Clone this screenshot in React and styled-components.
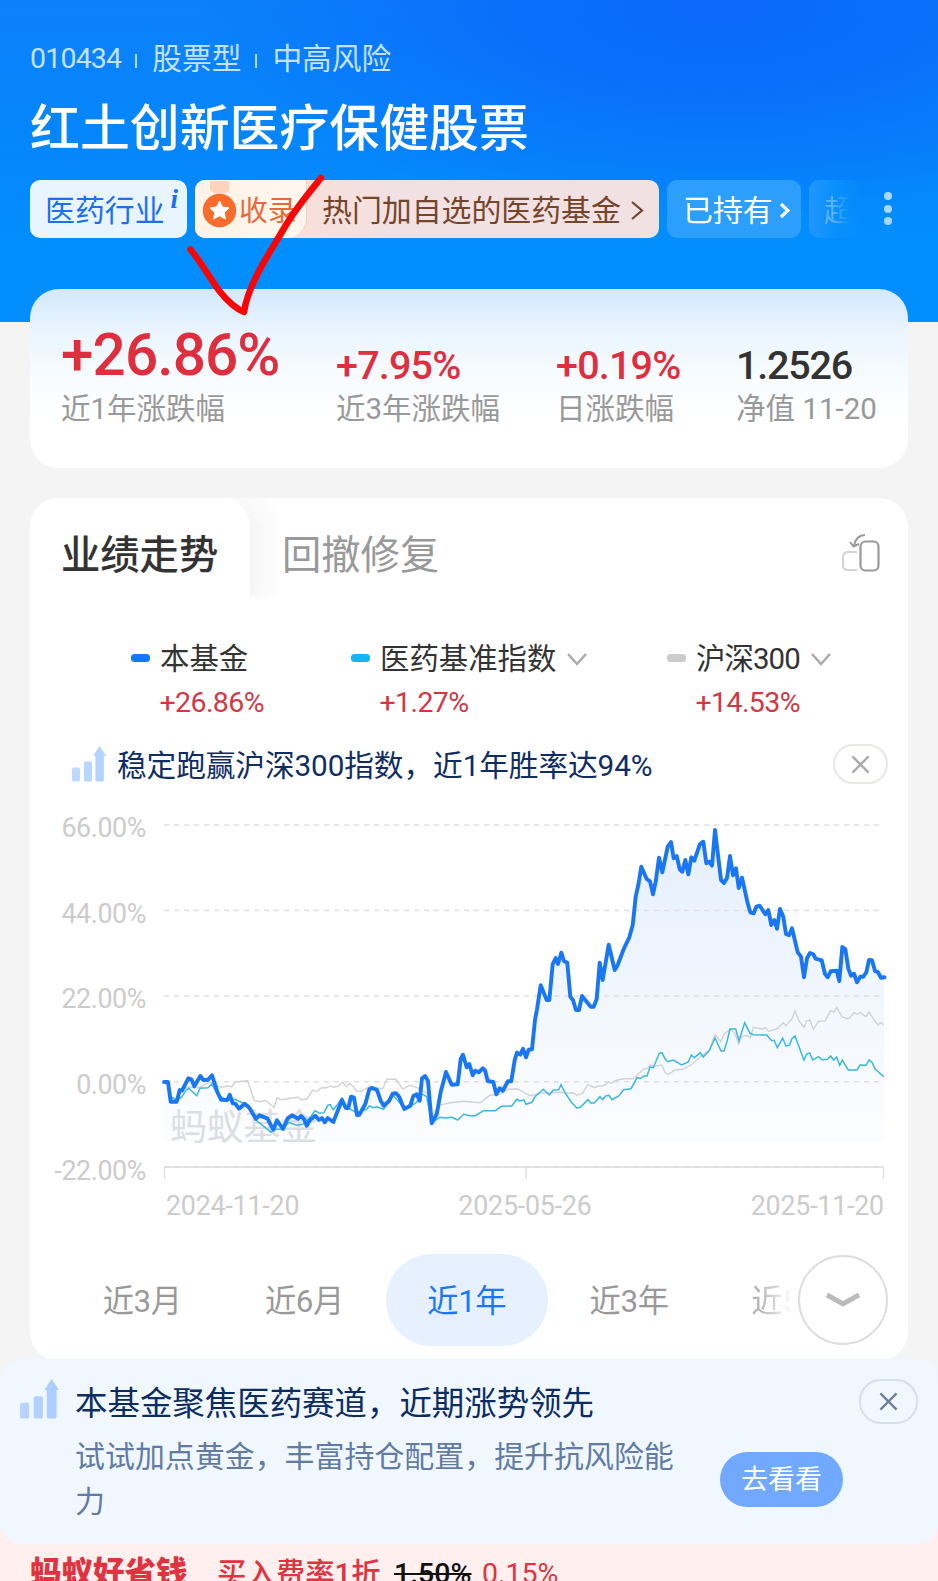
import React from "react";
import styled, { createGlobalStyle, css } from "styled-components";

const GlobalStyle = createGlobalStyle`
  * { box-sizing: border-box; }
  body {
    margin: 0;
    background: #f4f4f4;
    font-family: Roboto, "Noto Sans CJK SC", sans-serif;
    -webkit-font-smoothing: antialiased;
  }
`;

const Page = styled.main`
  position: relative;
  width: 938px;
  height: 1581px;
  overflow: hidden;
  display: flex;
  flex-direction: column;
  background: #f4f4f4;
`;

const Header = styled.header`
  height: 322px;
  flex: none;
  padding: 38px 30px 0;
  color: #fff;
  background:
    radial-gradient(ellipse 520px 210px at 720px 10px, #0a68fa 0%, rgba(10, 104, 250, 0.75) 35%, rgba(10, 104, 250, 0) 100%),
    linear-gradient(180deg, #0b80fa 0%, #0587fb 50%, #038efd 75%);
`;

const Meta = styled.div`
  display: flex;
  align-items: center;
  height: 42px;
  font-size: 29.7px;
  line-height: 42px;
  color: #c4e1ff;
`;

const FundCode = styled.span`
  font-size: 28.5px;
  letter-spacing: -0.8px;
`;

const Separator = styled.i`
  width: 2px;
  height: 14px;
  margin: 4px 15px 0 14px;
  background: #b5daff;
`;

const FundName = styled.h1`
  margin: 14px 0 0;
  height: 70px;
  font-size: 49.9px;
  line-height: 71px;
  font-weight: 500;
`;

const TagRow = styled.div`
  display: flex;
  gap: 8px;
  height: 58px;
  margin-top: 16px;
  margin-right: -31px;
`;

const tagTones = {
  light: css`background: #e9f5fe; color: #1b6ff0;`,
  pink: css`background: linear-gradient(90deg, #f8dfda 110px, #f2e1e2 200px); color: #75452a;`,
  clear: css`background: #2c9efc; color: #fff;`,
  faded: css`
    background: linear-gradient(90deg, #2196fc 0%, #0890fd 50%, rgba(3, 142, 253, 0) 100%);
    color: #58b2fd;
  `,
};

const Tag = styled.div`
  position: relative;
  display: flex;
  align-items: center;
  flex: none;
  width: ${(p) => p.$width}px;
  height: 58px;
  padding-left: ${(p) => p.$inset}px;
  border-radius: 10px;
  overflow: hidden;
  font-size: 29.9px;
  line-height: 58px;
  white-space: nowrap;
  ${(p) => tagTones[p.$tone]}
`;

const TagText = styled.span`
  padding-top: 3px;
`;

const InfoMark = styled.sup`
  position: absolute;
  right: 9px;
  top: 3px;
  font: italic 700 27px/32px "Liberation Serif", serif;
`;

const Award = styled.span`
  display: flex;
  align-items: center;
  width: 112px;
  height: 58px;
  padding-left: 7px;
  gap: 2px;
  margin-right: 15px;
  border-radius: 0 0 20px 0;
  border-right: 1px solid #f6cdbf;
  background: linear-gradient(90deg, #fff3e6, #fff7ee);
  color: #e9683c;
  font-size: 28.8px;
`;

const FadingText = styled(TagText)`
  -webkit-mask-image: linear-gradient(90deg, #000 30%, transparent 85%);
`;

const MoreDots = styled.div`
  display: flex;
  flex-direction: column;
  align-items: center;
  gap: 4.5px;
  width: 9px;
  padding-top: 12px;
  margin-left: ${(p) => p.$gap}px;
  i { width: 8px; height: 8px; border-radius: 50%; background: #a9d7ff; }
`;

const StatCard = styled.section`
  display: flex;
  flex: none;
  height: 179px;
  margin: -33px 30px 0 30px;
  padding-left: 31px;
  border-radius: 29px;
  background: linear-gradient(180deg, #d1e8fe 0%, #eaf5fe 24%, #f8fcff 50%, #fff 75%);
`;

const Stat = styled.div`
  width: ${(p) => p.$width}px;
  flex: none;
  white-space: nowrap;
`;

const StatValue = styled.div`
  display: flex;
  align-items: flex-end;
  height: 100px;
  padding-bottom: ${(p) => (p.$large ? 4 : 2)}px;
  font-size: ${(p) => (p.$large ? 58.5 : 39.5)}px;
  line-height: ${(p) => (p.$large ? 60 : 42)}px;
  letter-spacing: ${(p) => p.$tracking}px;
  font-weight: 500;
  color: ${(p) => (p.$dark ? "#333" : "#df2e3d")};
`;

const StatLabel = styled.div`
  height: 40px;
  font-size: 29.5px;
  line-height: 40px;
  color: #999;
`;

const Panel = styled.section`
  display: flex;
  flex-direction: column;
  flex: none;
  height: 863px;
  margin: 30px 30px 0 30px;
  border-radius: 29px;
  background: #fff;
`;

const Tabs = styled.div`
  display: flex;
  height: 112px;
  flex: none;
`;

const ActiveTab = styled.div`
  position: relative;
  z-index: 1;
  width: 220px;
  height: 104px;
  padding-left: 31px;
  border-radius: 29px 29px 0 0;
  background: #fff;
  font-size: 39.3px;
  line-height: 117px;
  font-weight: 500;
  color: #333;
`;

const TabShade = styled.div`
  width: 52px;
  height: 104px;
  margin-left: -20px;
  border-radius: 0 0 16px 0;
  background: linear-gradient(90deg, #f5f5f5 38%, #fff);
  -webkit-mask-image: linear-gradient(180deg, rgba(0, 0, 0, 0.5), #000 30%, #000 88%, transparent);
`;

const Tab = styled.div`
  flex: 1;
  font-size: 39.3px;
  line-height: 117px;
  color: #999;
`;

const RotateIcon = styled.svg`
  width: 40px;
  height: 44px;
  margin: 35px 28px 0 0;
`;

const Legend = styled.div`
  display: flex;
  height: 98px;
  margin-top: 28px;
  padding-left: 101px;
  flex: none;
`;

const LegendItem = styled.div`
  width: ${(p) => p.$width}px;
  flex: none;
`;

const LegendName = styled.div`
  display: flex;
  align-items: center;
  height: 42px;
  font-size: 29.4px;
  line-height: 42px;
  letter-spacing: ${(p) => p.$tracking || 0}px;
  color: #333;
  white-space: nowrap;
  &::before {
    content: "";
    width: 19px;
    height: 8px;
    margin-right: 10px;
    margin-top: -3px;
    border-radius: 3.5px;
    background: ${(p) => p.$color};
  }
`;

const LegendValue = styled.div`
  height: 44px;
  padding-left: 28.5px;
  font-size: 28.5px;
  line-height: 45px;
  letter-spacing: -0.6px;
  color: #d43643;
`;

const Hint = styled.div`
  display: flex;
  align-items: center;
  height: 40px;
  flex: none;
  margin-top: 8px;
  padding: 0 20px 0 42px;
  color: #0f2d62;
  font-size: 29.7px;
  line-height: 40px;
`;

const HintText = styled.span`
  flex: 1;
  margin-left: 11px;
  padding-top: 4px;
  letter-spacing: -0.1px;
  white-space: nowrap;
`;

const CloseButton = styled.button`
  display: flex;
  align-items: center;
  justify-content: center;
  width: ${(p) => p.$width}px;
  height: ${(p) => p.$height}px;
  padding: 0;
  border: 2px solid ${(p) => p.$line};
  border-radius: 22px;
  background: transparent;
  color: ${(p) => p.$ink};
`;

const Chart = styled.div`
  display: flex;
  flex: none;
  height: 412px;
  margin-top: 16px;
`;

const YAxis = styled.div`
  width: 116px;
  padding-top: 10px;
  flex: none;
  text-align: right;
  font-size: 26.8px;
  letter-spacing: -0.4px;
  color: #ccc;
  div { height: 85.7px; line-height: 37px; }
`;

const PlotColumn = styled.div`
  width: 740px;
  margin-left: -6px;
`;

const Plot = styled.svg`
  display: block;
  width: 760px;
  height: 384px;
`;

const XAxis = styled.div`
  display: flex;
  justify-content: space-between;
  width: 718px;
  height: 40px;
  margin: 6px 0 0 26px;
  font-size: 26.8px;
  line-height: 32px;
  letter-spacing: -0.2px;
  color: #ccc;
`;

const Watermark = styled.text`
  font-size: 36.8px;
  fill: #dcdee2;
`;

const Ranges = styled.div`
  display: flex;
  align-items: center;
  flex: none;
  height: 92px;
  margin-top: 42px;
  padding-left: 31px;
`;

const Range = styled.div`
  width: 162.3px;
  height: 92px;
  flex: none;
  border-radius: 46px;
  text-align: center;
  font-size: 31.3px;
  line-height: 96px;
  letter-spacing: -0.4px;
  color: ${(p) => (p.$active ? "#1b77f5" : "#999")};
  background: ${(p) => (p.$active ? "#e6f0ff" : "transparent")};
`;

const FadedRange = styled.div`
  width: 42px;
  height: 92px;
  margin-left: 41px;
  white-space: nowrap;
  font-size: 31.3px;
  line-height: 96px;
  color: #b5b5b5;
  -webkit-mask-image: linear-gradient(90deg, #000 20%, transparent);
`;

const ExpandButton = styled.button`
  position: relative;
  display: flex;
  align-items: center;
  justify-content: center;
  width: 90px;
  height: 90px;
  margin-left: 5px;
  padding: 0;
  flex: none;
  border: 2px solid #dedede;
  border-radius: 50%;
  background: #fff;
`;

const Notice = styled.aside`
  position: absolute;
  z-index: 1;
  left: 0;
  top: 1359px;
  display: flex;
  width: 938px;
  height: 185px;
  padding: 20px 20px 0;
  border-radius: 22px;
  background: #f0f7ff;
`;

const NoticeBody = styled.div`
  width: 620px;
  margin-left: 16px;
  h2 {
    margin: 3px 0 0;
    font-size: 32.45px;
    line-height: 44px;
    font-weight: 400;
    color: #0d2c60;
  }
  p {
    margin: 8px 0 0;
    width: 606px;
    font-size: 29.95px;
    line-height: 45px;
    color: #627ba2;
  }
`;

const NoticeActions = styled.div`
  display: flex;
  flex-direction: column;
  align-items: flex-end;
  flex: 1;
`;

const GoButton = styled.button`
  width: 123px;
  height: 55px;
  margin: 28px 75px 0 0;
  padding: 0;
  border: 0;
  border-radius: 28px;
  background: #70a9ff;
  color: #fff;
  font-family: inherit;
  font-size: 27px;
  line-height: 57px;
`;

const Promo = styled.footer`
  position: absolute;
  left: 0;
  bottom: 0;
  display: flex;
  width: 938px;
  height: 60px;
  padding: 31px 0 0 30px;
  background: #fff0ef;
  color: #df3440;
  font-size: 29.4px;
  line-height: 44px;
  white-space: nowrap;
`;

const PromoBrand = styled.strong`
  width: 187px;
  font-size: 31.5px;
  font-weight: 900;
`;

const PromoText = styled.span`
  width: 177px;
  font-weight: 500;
`;

const OldRate = styled.s`
  width: 88px;
  color: #111;
  font-size: 28.5px;
  font-weight: 500;
`;

const NewRate = styled.span`
  font-size: 28.5px;
`;

const PenMark = styled.svg`
  position: absolute;
  z-index: 2;
  left: 180px;
  top: 170px;
  width: 150px;
  height: 150px;
`;

const BLUE =
  "24,282 28,282 30.7,301.7 36.7,301.7 39.7,290 42,290.7 48.3,278.3 51.3,279.3 54.3,286.3 60.3,276 63.3,280 68,279.7 72,275.3 77.3,291.7 81,299.7 87.3,300 89.7,294.7 92.7,303.3 95.3,303.7 99,308.7 104.7,303.7 109.3,307.7 116,319 119.3,315.3 127.3,318.3 133.3,329.7 137,320.3 143,329 147.7,318.3 152,315.3 158,318.7 161,316 164.3,319.3 166.7,325.7 170.3,319.7 175.3,315.7 179,320 182,318 184.7,322.3 187.7,318 193.3,322 202,300 205.7,308 208.3,308 211,296.7 214,297.7 217,315 219.3,314.7 225.3,304 229.3,289.3 232,288 237,290 240.7,300.7 243.7,305.7 249.3,300.7 252.7,293.7 256,293.3 259.3,297 261.7,303.3 264.3,309 270.3,305.7 273.3,296 276.7,294.3 279.7,300.7 282,278.3 285,276 288,281 291.7,323.3 296.7,314.3 300.7,292 306,272 311.7,284.7 317.7,284.3 320.7,259 323,254.7 326.7,267.3 329.3,264 332.7,275.3 335.3,270.7 338.7,272.3 342.7,268.3 345,270.3 347.7,281 353.3,282 356.3,294.3 359.7,288.3 362.7,290.7 368,281.3 371.3,281.3 374.7,260 377,252.7 380.3,254.7 383,248.7 386,257.3 388.7,249.7 392,249.3 395,220 397,209.3 400.7,185.3 406.7,200 409.3,200 412.7,164 415.7,158 418,164 421.3,152.7 424,161 427.3,162.7 430.3,196.7 433,200 436,210 439,210 442,196 450.7,206.7 453.7,206.7 456.7,199 459.7,162.7 462.7,180 468.7,144.7 474.7,170 477.7,165 483.7,149 489.3,137.3 492.7,125 495.7,96.7 498.3,85 501.3,66.7 506.7,79 510,81.3 513,94.3 515.7,81.7 519,57.7 522.3,72.3 527.7,46.7 531,42 533.7,58.3 536.7,56 539.7,69.3 542.3,71.7 545.3,60 548.3,74.3 551.3,57.3 554.3,60.7 560,44 563.3,41.7 566.3,63.3 569.3,61.7 572,65.7 575,30 581,80 584,83 587,78 590,56 593,75.3 596,68.3 598.7,88 602,77.7 607.3,101.7 610.3,112.3 613.7,113.3 616.3,106.7 619.7,105.7 625.3,114.3 628.3,110 631.3,125 634.3,120 637,128.7 640,109 643.3,116.7 646,134 649,135.3 652,128.3 657.7,152.3 661,156.7 664,177.3 667,158.3 670,153 673.3,154.3 675.7,158.7 681.7,160.3 685,174 687.7,177.3 690.7,171.3 696.7,170.7 699.3,181 702.3,147 705.3,149 708.3,168.3 711,175.7 714,173.7 717,182.3 720.3,176.7 723.3,176.7 726.3,172.3 729,160 732,160.3 735,171 738,172.3 741,177.7 744.5,177.3";

const CYAN =
  "24,282 28,282 31,296.7 36.7,300.7 42,296.7 45.7,290.7 48.7,288.3 56.7,295.7 60,288.3 68,287.7 71.7,284 78,295.3 87.3,300 95,299.3 103.3,303.3 108.3,305 115,319.3 121.7,324.7 131,332.3 134.3,329.3 143,329 149,322.3 156.7,325.3 163.3,324 171.3,316 175,310.7 179,313 184,312.7 187.7,305.3 190,304.7 193.3,309.7 198,304 202,298 206.7,307.3 216.7,312.7 222,310.7 226.7,309.3 229.3,306 233.3,307.7 236.7,306.7 243.7,309.3 252.7,295 263.3,306.7 266.7,308.3 276.7,302.3 280.7,293.3 286.7,296.7 291.3,322.7 300,317.3 305,318 311.7,317.3 317.7,320 323.7,314.3 330,315.7 335.3,315.7 343.7,310.7 355.3,310.7 361.3,306.3 371.7,306 376.7,299.3 380,301 384,300 386,304.3 392,302.3 395,296.7 403.3,289.3 409.3,295 413.3,290 418.7,289.7 421,284.7 425,292.7 431,301.7 436.7,308 440.3,307.3 448,299.7 450.7,303 454.3,303 460,296.7 462.7,299.3 465.7,296 469,295.3 472,299.7 479,295.7 483.7,289.7 491,288.7 497,277.7 500.7,278.3 504,276 507,276 510,267 513.3,267.7 519.3,253.3 522,252.7 525,258.7 528,261.7 533.3,260 541.7,265 548.3,262 551.3,255 554.3,257.7 560.3,252.7 563.3,257 569.3,250.7 575,238 581,251 584,251 587,241.7 590,229 595.7,229 599,240.7 604.7,222.7 610,233.3 613.3,234.7 626.7,235 631.7,240.7 634,240.3 637.3,247.7 642.7,238.3 646,246 649.3,245.3 652,238.7 655,236 664,260 666.7,254 669.7,253 672.7,260 678.7,256.7 682,259.7 687.7,259.3 690.7,256 693.7,260 696.7,257 699.7,265.3 702.3,260 708.3,270 717,270 720,265 726,265.3 729,260 732.3,262.7 735,269 744,276.7";

const GRAY =
  "24,282 28,282 31,297 36,299 40,291 48,287 58,288 70,282 81,287.3 88.3,286 91.7,287 95,282 107.7,280.7 114.3,300.7 120,301.7 125,300.3 134,307.3 137,298 141.7,299.7 150,298.3 158,297.3 161.3,299.7 166.7,299 172.7,290 176.7,291.3 181.7,287.7 186.7,287.7 190,286 193.3,287.3 198.3,286 202.3,282.3 206.7,286.7 210,283.3 216.7,291 221.7,291.3 230,286 242.7,289 246.7,279.3 256,279.3 262.7,289 270,285.3 276.7,287.3 287,293 291.3,317 300,305 310,302.7 323.3,301.3 340,302.7 350,295.3 359.7,294.3 368,289.3 377.7,289 390,295.7 401.7,293.3 420,292.3 426.7,293.3 433.3,292.7 436.7,295.3 442.3,293.3 448,284.7 454.3,287.7 458.3,286 463.3,285.7 469,282 471.7,283.3 475,280.7 483.7,278.7 493.3,278.7 503.3,269.3 508.3,267.7 510,265 513.3,266.7 521.7,265 525,272.3 528,274.7 535,270 543.3,269.3 553.3,263.3 560,257.3 569.3,250 575,234.7 580.7,241.7 584,234.3 590,229.3 595,233.3 598.7,244 601.7,236.7 606,235.3 610.3,237.7 613.3,227.3 622.7,229 625.3,227.3 628.7,231.3 637,229 643.3,222.7 646,226 652,218.7 655,211 659,221 664,227.3 666.7,221 670,220 673.3,229.3 678.7,221.3 685,221 690.7,210.7 693.7,212 696.7,207.3 702.3,217 708.3,219 714.3,212.7 717.3,214.3 720,212.7 726,216.7 729,212 735,221.3 738.3,224.7 740.7,222.7 744,224.7";

const Stroke = styled.svg`
  flex: none;
  margin-left: ${(p) => p.$gap}px;
  margin-top: ${(p) => p.$drop}px;
`;

function Chevron({ width, height, stroke = 2.5, color = "currentColor", down, gap = 0, drop = 0 }) {
  const points = down
    ? `2,2 ${width / 2},${height - 2} ${width - 2},2`
    : `2,2 ${width - 2},${height / 2} 2,${height - 2}`;
  return (
    <Stroke width={width} height={height} $gap={gap} $drop={drop}>
      <polyline points={points} fill="none" stroke={color} strokeWidth={stroke} />
    </Stroke>
  );
}

function Cross({ size }) {
  return (
    <svg width={size} height={size} viewBox="0 0 20 20">
      <path d="M1.5 1.5 18.5 18.5M18.5 1.5 1.5 18.5" stroke="currentColor" strokeWidth="2.4" fill="none" />
    </svg>
  );
}

function GrowthIcon({ width, height, color }) {
  return (
    <svg width={width} height={height} viewBox="0 0 40 42" preserveAspectRatio="none" fill={color}>
      <rect x="0" y="25" width="9.500" height="16.500" rx="2" opacity=".85" />
      <rect x="14" y="18" width="9.500" height="23.500" rx="2" opacity=".92" />
      <path d="M32.500 0 40 11.500H37.500V39.500q0 2-2 2h-6q-2 0-2-2V11.500H25z" />
    </svg>
  );
}

function Medal() {
  return (
    <svg width="35" height="58" viewBox="0 0 35 58">
      <path d="M8 1h19v10q-9.500 5-19 0z" fill="#fcd3bd" />
      <circle cx="17.500" cy="30.500" r="16.700" fill="#fb6b2c" />
      <path d="m17.500 21 2.900 6 6.600.9-4.800 4.600 1.200 6.500-5.900-3.200-5.900 3.200 1.200-6.500-4.800-4.600 6.600-.9z" fill="#fff" stroke="#fff" strokeLinejoin="round" />
    </svg>
  );
}

const stats = [
  { value: "+26.86%", label: "近1年涨跌幅", width: 275, large: true, tracking: -0.9 },
  { value: "+7.95%", label: "近3年涨跌幅", width: 220, tracking: -0.8 },
  { value: "+0.19%", label: "日涨跌幅", width: 180, tracking: -0.8 },
  { value: "1.2526", label: "净值 11-20", width: 150, tracking: -1.2, dark: true },
];

const series = [
  { name: "本基金", value: "+26.86%", color: "#1677ff", width: 220 },
  { name: "医药基准指数", value: "+1.27%", color: "#12b5f5", width: 316, menu: true },
  { name: "沪深300", value: "+14.53%", color: "#ccc", width: 200, menu: true, tracking: -0.9 },
];

export default function App() {
  return (
    <>
      <GlobalStyle />
      <Page>
        <Header>
          <Meta>
            <FundCode>010434</FundCode>
            <Separator />
            <span>股票型</span>
            <Separator />
            <span>中高风险</span>
          </Meta>
          <FundName>红土创新医疗保健股票</FundName>
          <TagRow>
            <Tag $tone="light" $width={157} $inset={15}>
              <TagText>医药行业</TagText>
              <InfoMark>i</InfoMark>
            </Tag>
            <Tag $tone="pink" $width={464} $inset={0}>
              <Award><Medal /><TagText>收录</TagText></Award>
              <TagText>热门加自选的医药基金</TagText>
              <Chevron width={14} height={21} gap={9} drop={3} stroke={2.2} />
            </Tag>
            <Tag $tone="clear" $width={134} $inset={16}>
              <TagText>已持有</TagText>
              <Chevron width={11} height={17} gap={6} drop={2} stroke={3.2} />
            </Tag>
            <Tag $tone="faded" $width={54} $inset={15}>
              <FadingText>超</FadingText>
            </Tag>
            <MoreDots $gap={12}><i /><i /><i /></MoreDots>
          </TagRow>
        </Header>

        <StatCard>
          {stats.map((s) => (
            <Stat key={s.label} $width={s.width}>
              <StatValue $large={s.large} $dark={s.dark} $tracking={s.tracking}>{s.value}</StatValue>
              <StatLabel>{s.label}</StatLabel>
            </Stat>
          ))}
        </StatCard>

        <Panel>
          <Tabs>
            <ActiveTab>业绩走势</ActiveTab>
            <TabShade />
            <Tab>回撤修复</Tab>
            <RotateIcon viewBox="0 0 40 44" fill="none" strokeWidth="2">
              <path d="M17 19H8q-5 0-5 5v8q0 5 5 5h9" stroke="#d4d4d4" />
              <rect x="20.500" y="8.500" width="18" height="29" rx="5" stroke="#999" strokeWidth="2.200" />
              <path d="M25 2q-9 0-11 11M10 9l3.500 4.500L19 11" stroke="#999" />
            </RotateIcon>
          </Tabs>

          <Legend>
            {series.map((s) => (
              <LegendItem key={s.name} $width={s.width}>
                <LegendName $color={s.color} $tracking={s.tracking}>
                  {s.name}
                  {s.menu && <Chevron down width={22} height={14} gap={10} color="#aaa" />}
                </LegendName>
                <LegendValue>{s.value}</LegendValue>
              </LegendItem>
            ))}
          </Legend>

          <Hint>
            <GrowthIcon width={34} height={36} color="#b3d2ff" />
            <HintText>稳定跑赢沪深300指数，近1年胜率达94%</HintText>
            <CloseButton $width={55} $height={40} $line="#e8e8e5" $ink="#aaa"><Cross size={19} /></CloseButton>
          </Hint>

          <Chart>
            <YAxis>
              {["66.00%", "44.00%", "22.00%", "0.00%", "-22.00%"].map((t) => <div key={t}>{t}</div>)}
            </YAxis>
            <PlotColumn>
              <Plot viewBox="0 0 760 384">
                <defs>
                  <linearGradient id="area" x1="0" y1="30" x2="0" y2="342" gradientUnits="userSpaceOnUse">
                    <stop offset="0" stopColor="#e5effd" />
                    <stop offset="1" stopColor="#fcfdff" />
                  </linearGradient>
                </defs>
                <polygon points={`${BLUE} 744,342 24,342`} fill="url(#area)" />
                {[25, 110.5, 196, 281.7, 367].map((y) => (
                  <line key={y} x1="24" x2="744" y1={y} y2={y} stroke="#dfdfdf" strokeWidth="1.500" strokeDasharray="5 5" />
                ))}
                <path d="M24.500 379V367H743.500V379M386 367V379" stroke="#dcdcdc" strokeWidth="1.300" fill="none" />
                <Watermark x="30" y="340">蚂蚁基金</Watermark>
                <polyline points={GRAY} fill="none" stroke="#d0d2d6" strokeWidth="1.400" />
                <polyline points={CYAN} fill="none" stroke="#39b9dc" strokeWidth="1.500" />
                <polyline points={BLUE} fill="none" stroke="#1977f5" strokeWidth="3.900" strokeLinejoin="round" strokeLinecap="round" />
              </Plot>
              <XAxis>
                <span>2024-11-20</span>
                <span>2025-05-26</span>
                <span>2025-11-20</span>
              </XAxis>
            </PlotColumn>
          </Chart>

          <Ranges>
            <Range>近3月</Range>
            <Range>近6月</Range>
            <Range $active>近1年</Range>
            <Range>近3年</Range>
            <FadedRange>近5</FadedRange>
            <ExpandButton>
              <svg width="34" height="18" viewBox="0 0 34 18">
                <polyline points="1,4 17,13 33,4" fill="none" stroke="#bbb" strokeWidth="5" />
              </svg>
            </ExpandButton>
          </Ranges>
        </Panel>

        <Notice>
          <GrowthIcon width={39} height={40} color="#accdff" />
          <NoticeBody>
            <h2>本基金聚焦医药赛道，近期涨势领先</h2>
            <p>试试加点黄金，丰富持仓配置，提升抗风险能力</p>
          </NoticeBody>
          <NoticeActions>
            <CloseButton $width={59} $height={45} $line="#d5deed" $ink="#6d7f9f"><Cross size={19} /></CloseButton>
            <GoButton>去看看</GoButton>
          </NoticeActions>
        </Notice>

        <Promo>
          <PromoBrand>蚂蚁好省钱</PromoBrand>
          <PromoText>买入费率1折</PromoText>
          <OldRate>1.50%</OldRate>
          <NewRate>0.15%</NewRate>
        </Promo>

        <PenMark viewBox="180 170 150 150">
          <path
            d="M190.500 249.500C201 262 211 280 219 290.500C228 302 237 309 244 312C246 297 252 285 257 275C265 259 273 247 283 230C295 209 307 195 321 178"
            fill="none" stroke="#f90505" strokeWidth="6.500" strokeLinecap="round" strokeLinejoin="round"
          />
        </PenMark>
      </Page>
    </>
  );
}
